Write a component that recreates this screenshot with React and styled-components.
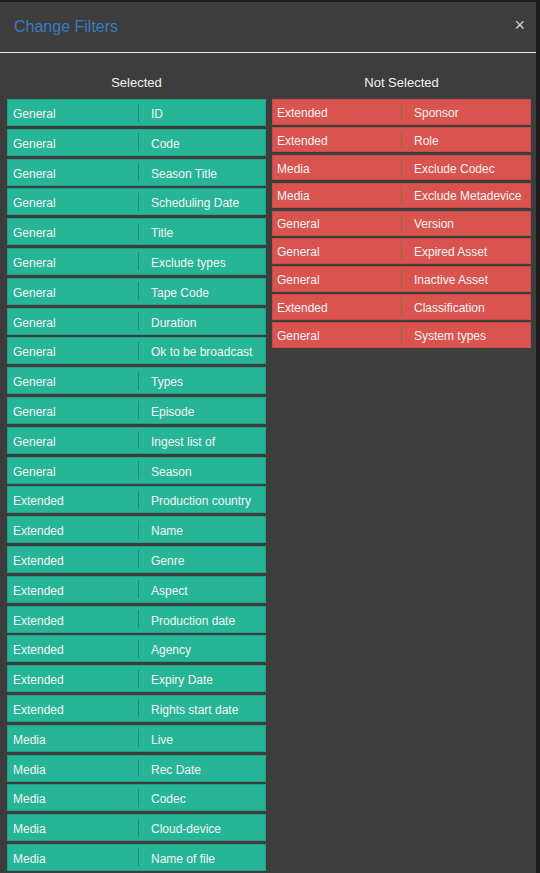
import React from 'react';
import styled, { createGlobalStyle } from 'styled-components';

const GlobalStyle = createGlobalStyle`
  html, body {
    margin: 0;
    padding: 0;
    background: #1c1c1c;
    font-family: "Liberation Sans", Arial, sans-serif;
    overflow: hidden;
  }
`;

const colors = {
  panel: '#3d3d3d',
  green: '#27b598',
  greenBorder: '#21a187',
  greenDivider: '#1b8a72',
  red: '#d9534f',
  redBorder: '#c94a46',
  redDivider: '#8e6b3f',
  title: '#3a7bbf',
};

const Modal = styled.div`
  width: 536px;
  margin-top: 2px;
  min-height: 900px;
  background: ${colors.panel};
`;

const Header = styled.div`
  display: flex;
  align-items: center;
  justify-content: space-between;
  height: 50px;
  padding: 0 14px;
  border-bottom: 1px solid #e6e6e6;
`;

const Title = styled.h4`
  margin: 0;
  font-size: 16px;
  font-weight: 400;
  color: ${colors.title};
`;

const Close = styled.span`
  font-size: 18px;
  line-height: 1;
  color: #d0d0d0;
  margin-top: -4px;
  margin-right: -3px;
`;

const Columns = styled.div`
  display: grid;
  grid-template-columns: 259px 259px;
  column-gap: 6px;
  padding: 0 5px 0 7px;
`;

const Column = styled.div`
  display: flex;
  flex-direction: column;
`;

const ColumnTitle = styled.div`
  height: 45px;
  display: flex;
  align-items: center;
  justify-content: center;
  padding-top: 14px;
  box-sizing: border-box;
  margin-bottom: 1px;
  font-size: 13px;
  color: #f2f2f2;
`;

const List = styled.div`
  display: flex;
  flex-direction: column;
  gap: ${(p) => p.$gap}px;
`;

const Row = styled.div`
  display: flex;
  align-items: center;
  height: ${(p) => p.$height}px;
  box-sizing: border-box;
  background: ${(p) => (p.$selected ? colors.green : colors.red)};
  border: 1px solid ${(p) => (p.$selected ? colors.greenBorder : colors.redBorder)};
  font-size: 12px;
  color: #f4f4f4;
`;

const Group = styled.span`
  width: ${(p) => (p.$selected ? 130 : 128)}px;
  padding-left: ${(p) => (p.$selected ? 5 : 4)}px;
  box-sizing: border-box;
  white-space: nowrap;
  margin-top: ${(p) => (p.$selected ? 3 : 2)}px;
`;

const Divider = styled.span`
  width: 1px;
  height: 18px;
  background: ${(p) => (p.$selected ? colors.greenDivider : colors.redDivider)};
`;

const Name = styled.span`
  padding-left: 12px;
  white-space: nowrap;
  margin-top: ${(p) => (p.$selected ? 3 : 2)}px;
`;

const selected = [
  ['General', 'ID'],
  ['General', 'Code'],
  ['General', 'Season Title'],
  ['General', 'Scheduling Date'],
  ['General', 'Title'],
  ['General', 'Exclude types'],
  ['General', 'Tape Code'],
  ['General', 'Duration'],
  ['General', 'Ok to be broadcast'],
  ['General', 'Types'],
  ['General', 'Episode'],
  ['General', 'Ingest list of'],
  ['General', 'Season'],
  ['Extended', 'Production country'],
  ['Extended', 'Name'],
  ['Extended', 'Genre'],
  ['Extended', 'Aspect'],
  ['Extended', 'Production date'],
  ['Extended', 'Agency'],
  ['Extended', 'Expiry Date'],
  ['Extended', 'Rights start date'],
  ['Media', 'Live'],
  ['Media', 'Rec Date'],
  ['Media', 'Codec'],
  ['Media', 'Cloud-device'],
  ['Media', 'Name of file'],
];

const notSelected = [
  ['Extended', 'Sponsor'],
  ['Extended', 'Role'],
  ['Media', 'Exclude Codec'],
  ['Media', 'Exclude Metadevice'],
  ['General', 'Version'],
  ['General', 'Expired Asset'],
  ['General', 'Inactive Asset'],
  ['Extended', 'Classification'],
  ['General', 'System types'],
];

const FilterList = ({ items, isSelected }) => (
  <List $gap={isSelected ? 2.8 : 2.4}>
    {items.map(([group, name]) => (
      <Row key={name} $selected={isSelected} $height={isSelected ? 27 : 25.5}>
        <Group $selected={isSelected}>{group}</Group>
        <Divider $selected={isSelected} />
        <Name $selected={isSelected}>{name}</Name>
      </Row>
    ))}
  </List>
);

export default function App() {
  return (
    <>
      <GlobalStyle />
      <Modal>
        <Header>
          <Title>Change Filters</Title>
          <Close>×</Close>
        </Header>
        <Columns>
          <Column>
            <ColumnTitle>Selected</ColumnTitle>
            <FilterList items={selected} isSelected />
          </Column>
          <Column>
            <ColumnTitle>Not Selected</ColumnTitle>
            <FilterList items={notSelected} isSelected={false} />
          </Column>
        </Columns>
      </Modal>
    </>
  );
}
